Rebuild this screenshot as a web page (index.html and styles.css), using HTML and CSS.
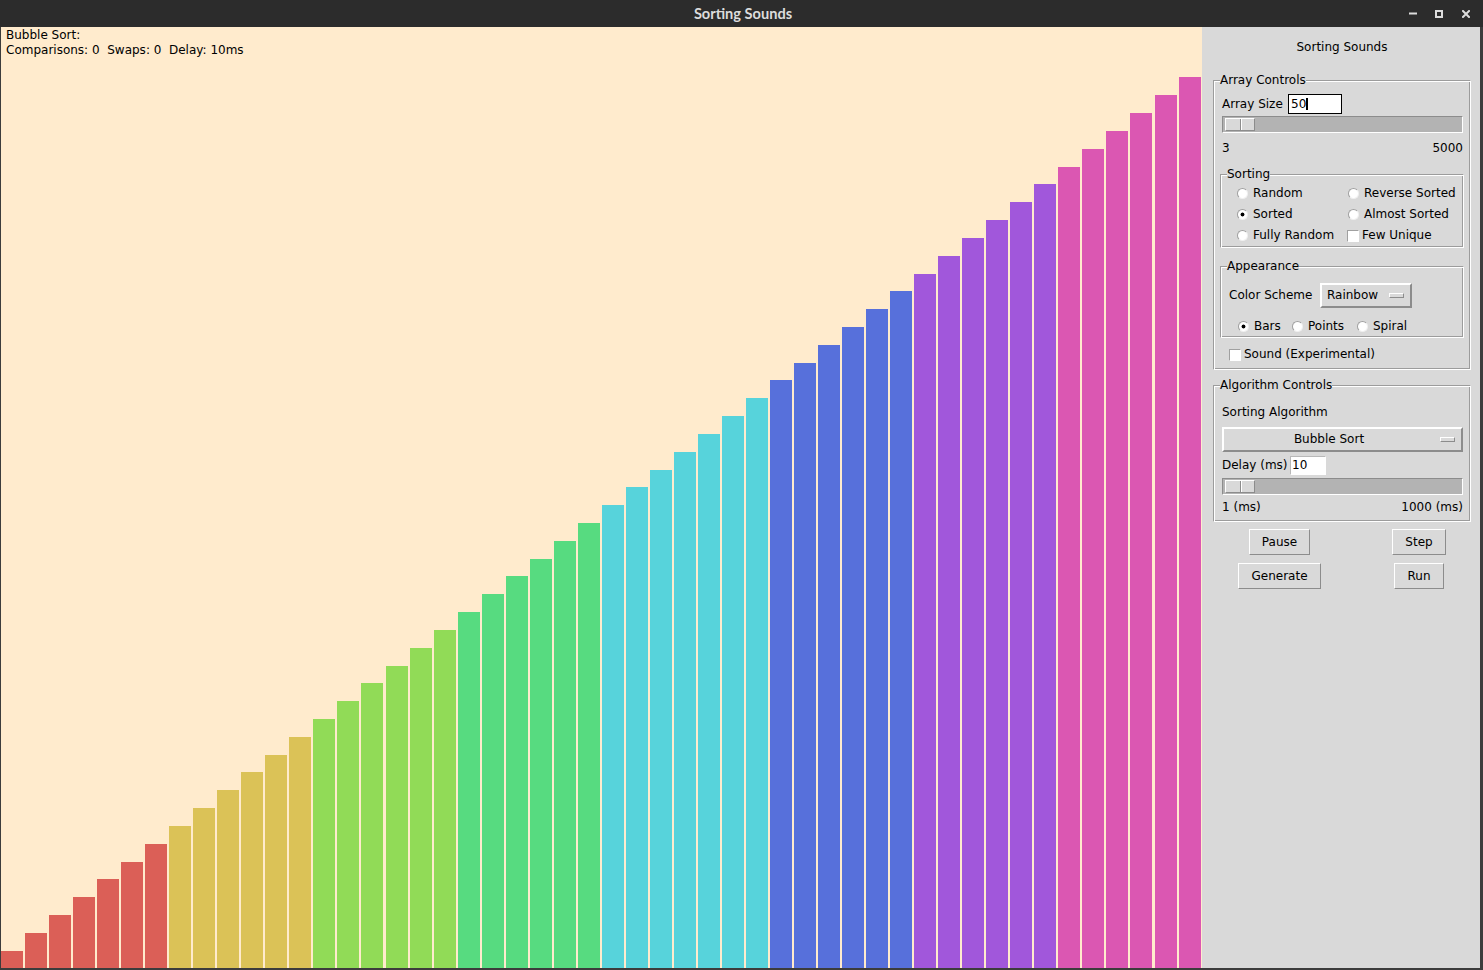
FILE: index.html
```html
<!DOCTYPE html>
<html lang="en">
<head>
<meta charset="utf-8">
<title>Sorting Sounds</title>
<link rel="stylesheet" href="styles.css">
</head>
<body>
<div class="window">
  <header class="titlebar">
    <div class="tb-spacer"></div>
    <div class="title">Sorting Sounds</div>
    <div class="wm-controls">
      <svg class="wm-icon wm-min" width="8" height="8" viewBox="0 0 8 8"><rect x="0" y="2.5" width="8" height="2" fill="#dcdcdc"/></svg>
      <svg class="wm-icon wm-max" width="8" height="8" viewBox="0 0 8 8"><rect x="1" y="1" width="6" height="6" fill="none" stroke="#dcdcdc" stroke-width="2"/></svg>
      <svg class="wm-icon wm-close" width="8" height="8" viewBox="0 0 8 8"><path d="M1 1L7 7M7 1L1 7" stroke="#dcdcdc" stroke-width="2" stroke-linecap="square"/></svg>
    </div>
  </header>
  <div class="content">
    <main class="canvas">
      <div class="stats"><div>Bubble Sort:</div><div>Comparisons: 0  Swaps: 0  Delay: 10ms</div></div>
      <div class="bars">
        <div class="bar c0" style="height:17px"></div>
        <div class="bar c0" style="height:35px"></div>
        <div class="bar c0" style="height:53px"></div>
        <div class="bar c0" style="height:71px"></div>
        <div class="bar c0" style="height:89px"></div>
        <div class="bar c0" style="height:106px"></div>
        <div class="bar c0" style="height:124px"></div>
        <div class="bar c1" style="height:142px"></div>
        <div class="bar c1" style="height:160px"></div>
        <div class="bar c1" style="height:178px"></div>
        <div class="bar c1" style="height:196px"></div>
        <div class="bar c1" style="height:213px"></div>
        <div class="bar c1" style="height:231px"></div>
        <div class="bar c2" style="height:249px"></div>
        <div class="bar c2" style="height:267px"></div>
        <div class="bar c2" style="height:285px"></div>
        <div class="bar c2" style="height:302px"></div>
        <div class="bar c2" style="height:320px"></div>
        <div class="bar c2" style="height:338px"></div>
        <div class="bar c3" style="height:356px"></div>
        <div class="bar c3" style="height:374px"></div>
        <div class="bar c3" style="height:392px"></div>
        <div class="bar c3" style="height:409px"></div>
        <div class="bar c3" style="height:427px"></div>
        <div class="bar c3" style="height:445px"></div>
        <div class="bar c4" style="height:463px"></div>
        <div class="bar c4" style="height:481px"></div>
        <div class="bar c4" style="height:498px"></div>
        <div class="bar c4" style="height:516px"></div>
        <div class="bar c4" style="height:534px"></div>
        <div class="bar c4" style="height:552px"></div>
        <div class="bar c4" style="height:570px"></div>
        <div class="bar c5" style="height:588px"></div>
        <div class="bar c5" style="height:605px"></div>
        <div class="bar c5" style="height:623px"></div>
        <div class="bar c5" style="height:641px"></div>
        <div class="bar c5" style="height:659px"></div>
        <div class="bar c5" style="height:677px"></div>
        <div class="bar c6" style="height:694px"></div>
        <div class="bar c6" style="height:712px"></div>
        <div class="bar c6" style="height:730px"></div>
        <div class="bar c6" style="height:748px"></div>
        <div class="bar c6" style="height:766px"></div>
        <div class="bar c6" style="height:784px"></div>
        <div class="bar c7" style="height:801px"></div>
        <div class="bar c7" style="height:819px"></div>
        <div class="bar c7" style="height:837px"></div>
        <div class="bar c7" style="height:855px"></div>
        <div class="bar c7" style="height:873px"></div>
        <div class="bar c7" style="height:891px"></div>
      </div>
    </main>
    <aside class="panel">
      <div class="panel-title">Sorting Sounds</div>

      <fieldset class="group group-array">
        <legend>Array Controls</legend>
        <div class="group-body array-body">
          <div class="size-row">
            <span class="size-label">Array Size</span>
            <div class="entry entry-focus">50<span class="caret"></span></div>
          </div>
          <div class="trough"><div class="thumb"></div></div>
          <div class="range-row"><span>3</span><span>5000</span></div>

          <fieldset class="group sub-group sorting-group">
            <legend>Sorting</legend>
            <div class="choice-grid">
              <div class="radio">Random</div>
              <div class="radio">Reverse Sorted</div>
              <div class="radio checked">Sorted</div>
              <div class="radio">Almost Sorted</div>
              <div class="radio">Fully Random</div>
              <div class="check">Few Unique</div>
            </div>
          </fieldset>

          <fieldset class="group sub-group appearance-group">
            <legend>Appearance</legend>
            <div class="scheme-row">
              <span class="scheme-label">Color Scheme</span>
              <div class="optionmenu scheme-menu"><span class="om-text">Rainbow</span><span class="om-ind"></span></div>
            </div>
            <div class="style-row">
              <div class="radio checked item-bars">Bars</div>
              <div class="radio item-points">Points</div>
              <div class="radio">Spiral</div>
            </div>
          </fieldset>

          <div class="check sound-check">Sound (Experimental)</div>
        </div>
      </fieldset>

      <fieldset class="group group-algo">
        <legend>Algorithm Controls</legend>
        <div class="group-body algo-body">
          <div class="algo-label">Sorting Algorithm</div>
          <div class="optionmenu algo-menu"><span class="om-text">Bubble Sort</span><span class="om-ind"></span></div>
          <div class="delay-row">
            <span class="delay-label">Delay (ms)</span>
            <div class="entry entry-delay">10</div>
          </div>
          <div class="trough"><div class="thumb"></div></div>
          <div class="range-row"><span>1 (ms)</span><span>1000 (ms)</span></div>
        </div>
      </fieldset>

      <div class="buttons">
        <div class="btn">Pause</div>
        <div class="btn">Step</div>
        <div class="btn">Generate</div>
        <div class="btn">Run</div>
      </div>
    </aside>
  </div>
</div>
</body>
</html>
```

FILE: styles.css
```css
* { box-sizing: border-box; }

html, body {
  margin: 0;
  padding: 0;
}

body {
  width: 1483px;
  height: 970px;
  overflow: hidden;
  background: #3c3c3c;
  font-family: "DejaVu Sans", sans-serif;
  font-size: 12px;
  line-height: 15px;
  color: #000;
}

.window {
  display: flex;
  flex-direction: column;
  width: 1483px;
  height: 970px;
}

/* ---------- title bar ---------- */
.titlebar {
  height: 27px;
  flex: none;
  background: #2c2c2c;
  display: grid;
  grid-template-columns: 1fr auto 1fr;
  align-items: start;
}

.title {
  font-family: Lato, "Noto Sans", sans-serif;
  font-weight: 700;
  font-size: 14.6px;
  line-height: 27px;
  color: #dcdcdc;
  padding-left: 3px;
}

.wm-controls {
  justify-self: end;
  display: flex;
  padding: 10px 13px 0 0;
}

.wm-icon { display: block; }
.wm-max { margin-left: 18px; }
.wm-close { margin-left: 19px; }

/* ---------- main area ---------- */
.content {
  flex: 1;
  display: flex;
  padding: 0 3px 2px 1px;
  background: #3c3c3c;
}

.canvas {
  width: 1201px;
  flex: none;
  background: #ffebcd;
  display: flex;
  flex-direction: column;
}

.stats {
  flex: none;
  height: 30px;
  padding: 1px 0 0 5px;
  white-space: pre;
}

.bars {
  flex: 1;
  display: flex;
  align-items: flex-end;
  gap: 2.04px;
}

.bar { width: 22px; flex: none; }
.c0 { background: #db5f57; }
.c1 { background: #dbc257; }
.c2 { background: #91db57; }
.c3 { background: #57db80; }
.c4 { background: #57d3db; }
.c5 { background: #5770db; }
.c6 { background: #a157db; }
.c7 { background: #db57b2; }

/* ---------- control panel ---------- */
.panel {
  width: 278px;
  flex: none;
  background: #d9d9d9;
  padding: 13px 9px 0 11px;
}

.panel-title {
  text-align: center;
  height: 15px;
}

.group {
  margin: 0;
  padding: 0;
  min-width: 0;
  border: 1px solid;
  border-color: #9c9c9c #ffffff #ffffff #9c9c9c;
  box-shadow: inset 1px 1px 0 #ffffff, inset -1px -1px 0 #9c9c9c;
}

.group legend {
  padding: 0;
  margin-left: 6px;
  background: #d9d9d9;
  line-height: 15px;
}

.group-array { margin-top: 18px; }

.array-body { padding: 0 6px 7px 6px; }

.size-row {
  margin-top: 6px;
  padding-left: 2px;
  display: flex;
  align-items: center;
  height: 20px;
}

.size-label { width: 66px; flex: none; }

.entry {
  background: #fff;
  flex: none;
  white-space: nowrap;
}

.entry-focus {
  width: 54px;
  height: 20px;
  border: 1px solid #000;
  padding-left: 2px;
  line-height: 18px;
  display: flex;
  align-items: center;
}

.caret {
  display: inline-block;
  width: 2px;
  height: 12px;
  background: #000;
}

.trough {
  height: 17px;
  margin: 2px 1px 0 2px;
  background: #b3b3b3;
  border: 1px solid;
  border-color: #8c8c8c #ffffff #ffffff #8c8c8c;
  padding: 1px 2px;
}

.thumb {
  width: 30px;
  height: 13px;
  background: #d9d9d9;
  border: 1px solid;
  border-color: #ffffff #8c8c8c #8c8c8c #ffffff;
  background-image: linear-gradient(to right, transparent 14px, #8c8c8c 14px, #8c8c8c 15px, #ffffff 15px, #ffffff 16px, transparent 16px);
}

.range-row {
  display: flex;
  justify-content: space-between;
  margin-top: 8px;
  padding: 0 1px 0 2px;
  height: 15px;
}

.sub-group { margin-top: 11px; }

.sorting-group { padding-bottom: 1px; }

.choice-grid {
  display: grid;
  grid-template-columns: 111px 1fr;
  padding: 1px 0 0 15px;
}

.radio {
  display: flex;
  align-items: center;
  height: 21px;
  white-space: nowrap;
}

.radio::before {
  content: "";
  flex: none;
  width: 9px;
  height: 9px;
  margin: 0 5px 0 1px;
  border-radius: 50%;
  background: #fff;
  border: 1px solid;
  border-color: #a0a0a0 #f0f0f0 #f0f0f0 #a0a0a0;
}

.radio.checked::before {
  background: radial-gradient(circle, #000 0, #000 1.6px, #fff 2.3px);
}

.check {
  display: flex;
  align-items: center;
  height: 21px;
  white-space: nowrap;
}

.check::before {
  content: "";
  flex: none;
  width: 10px;
  height: 10px;
  margin-right: 3px;
  background: #fff;
  border: 1px solid;
  border-color: #a0a0a0 #ffffff #ffffff #a0a0a0;
}

.scheme-row {
  display: flex;
  align-items: center;
  margin-top: 9px;
  padding-left: 8px;
  height: 25px;
}

.scheme-label { width: 91px; flex: none; }

.optionmenu {
  display: flex;
  align-items: center;
  height: 25px;
  background: #d9d9d9;
  border: 2px solid;
  border-color: #ffffff #8c8c8c #8c8c8c #ffffff;
}

.om-text { flex: 1; white-space: nowrap; }

.om-ind {
  flex: none;
  width: 15px;
  height: 5px;
  margin: 0 6px;
  background: #d9d9d9;
  border: 1px solid;
  border-color: #ffffff #8c8c8c #8c8c8c #ffffff;
}

.scheme-menu {
  width: 92px;
  padding-left: 5px;
}

.scheme-menu .om-ind { margin-left: 0; }

.style-row {
  display: flex;
  margin-top: 8px;
  padding-left: 16px;
}

.item-bars { width: 54px; }
.item-points { width: 65px; }

.sound-check {
  margin-top: 9px;
  padding-left: 9px;
  height: 15px;
}

.group-algo { margin-top: 8px; }

.algo-body { padding: 0 7px 6px 8px; }

.algo-label {
  margin-top: 12px;
  height: 15px;
}

.algo-menu { margin-top: 7px; }

.algo-menu .om-text { text-align: center; }

.delay-row {
  display: flex;
  align-items: center;
  margin-top: 4px;
  height: 19px;
}

.delay-label { width: 68px; flex: none; }

.entry-delay {
  width: 36px;
  height: 19px;
  border: 1px solid;
  border-color: #b8b8b8 #ffffff #ffffff #b8b8b8;
  padding-left: 1px;
  line-height: 17px;
}

.algo-body .trough { margin: 3px 0 0 0; }
.algo-body .range-row { margin-top: 5px; padding: 0; }

.buttons {
  display: grid;
  grid-template-columns: 101px 100px;
  column-gap: 39px;
  row-gap: 8px;
  justify-items: center;
  margin-top: 7px;
  padding-left: 16px;
}

.btn {
  height: 26px;
  padding: 0 12px;
  line-height: 24px;
  background: #d9d9d9;
  border: 1px solid;
  border-color: #ffffff #8c8c8c #8c8c8c #ffffff;
  white-space: nowrap;
}
```
